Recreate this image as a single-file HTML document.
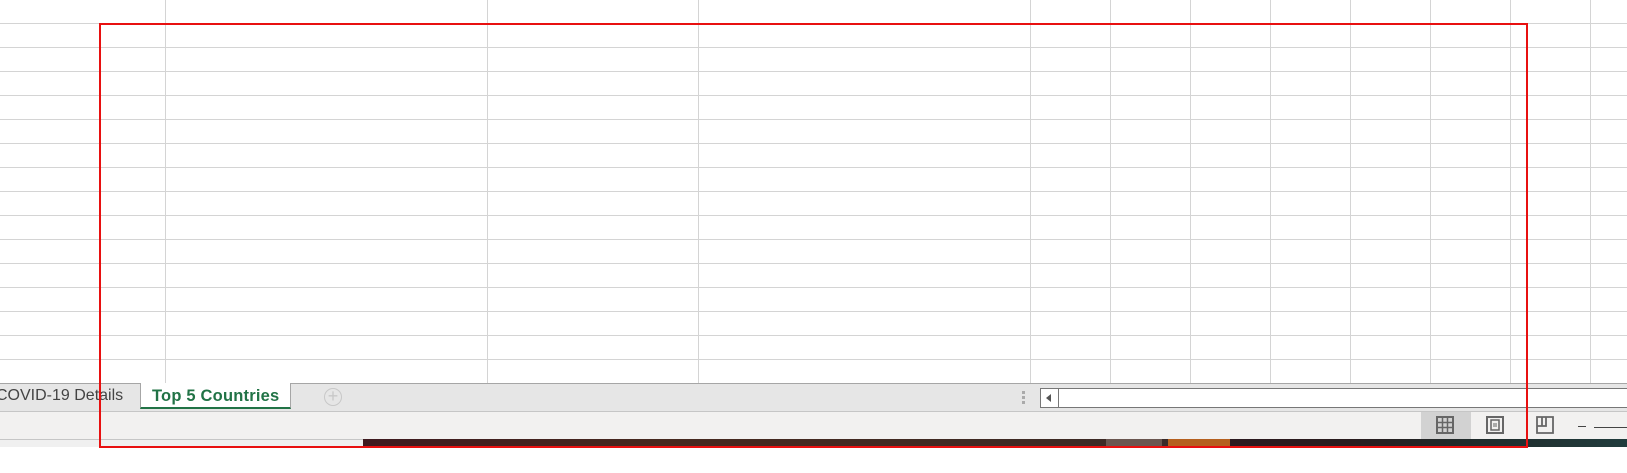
<!DOCTYPE html>
<html><head><style>
body{margin:0;width:1627px;height:473px;background:#fff;position:relative;overflow:hidden;font-family:"Liberation Sans",sans-serif}
.a{position:absolute}
</style></head><body>
<div class="a" style="left:0;top:0;width:1627px;height:383px;
background-image:
linear-gradient(to bottom,transparent 23px,#d4d4d4 23px,#d4d4d4 24px,transparent 24px);
background-size:1627px 24px;background-position:0 0"></div>
<div class="a" style="left:165px;top:0;width:1px;height:383px;background:#d4d4d4"></div>
<div class="a" style="left:487px;top:0;width:1px;height:383px;background:#d4d4d4"></div>
<div class="a" style="left:698px;top:0;width:1px;height:383px;background:#d4d4d4"></div>
<div class="a" style="left:1030px;top:0;width:1px;height:383px;background:#d4d4d4"></div>
<div class="a" style="left:1110px;top:0;width:1px;height:383px;background:#d4d4d4"></div>
<div class="a" style="left:1190px;top:0;width:1px;height:383px;background:#d4d4d4"></div>
<div class="a" style="left:1270px;top:0;width:1px;height:383px;background:#d4d4d4"></div>
<div class="a" style="left:1350px;top:0;width:1px;height:383px;background:#d4d4d4"></div>
<div class="a" style="left:1430px;top:0;width:1px;height:383px;background:#d4d4d4"></div>
<div class="a" style="left:1510px;top:0;width:1px;height:383px;background:#d4d4d4"></div>
<div class="a" style="left:1590px;top:0;width:1px;height:383px;background:#d4d4d4"></div>
<!-- tab bar -->
<div class="a" style="left:0;top:383px;width:1627px;height:29px;background:#e6e6e6;border-top:1px solid #a6a6a6;border-bottom:1px solid #c6c6c6;box-sizing:border-box"></div>
<div class="a" style="left:-4px;top:384px;font-size:16px;color:#444;line-height:24px">COVID-19 Details</div>
<div class="a" style="left:140px;top:383px;width:151px;height:26px;background:#fff;border-left:1px solid #a6a6a6;border-right:1px solid #a6a6a6;border-bottom:2px solid #217346;box-sizing:border-box"></div>
<div class="a" style="left:152px;top:384px;font-size:16.5px;font-weight:bold;color:#217346;line-height:24px;letter-spacing:0.2px">Top 5 Countries</div>
<div class="a" style="left:324px;top:388px;width:18px;height:18px;border:1px solid #c8c8c8;border-radius:50%;box-sizing:border-box;color:#c8c8c8;font-size:18px;line-height:15px;text-align:center">+</div>
<div class="a" style="left:1022px;top:391px;width:3px;height:3px;background:#aaa;box-shadow:0 5px #aaa,0 10px #aaa"></div>
<div class="a" style="left:1040px;top:388px;width:600px;height:20px;background:#fff;border:1px solid #777;box-sizing:border-box"></div>
<div class="a" style="left:1058px;top:388px;width:1px;height:20px;background:#777"></div>
<div class="a" style="left:1046px;top:394px;width:0;height:0;border-top:4px solid transparent;border-bottom:4px solid transparent;border-right:5px solid #555"></div>
<!-- status bar -->
<div class="a" style="left:0;top:412px;width:1627px;height:27px;background:#f2f1f0"></div>
<div class="a" style="left:1421px;top:412px;width:50px;height:27px;background:#d2d2d2"></div>
<svg class="a" style="left:1436px;top:416px" width="18" height="18"><rect x="1" y="1" width="16" height="16" fill="none" stroke="#666" stroke-width="2"/><path d="M6.5 1v16M11.5 1v16M1 6.5h16M1 11.5h16" stroke="#666" stroke-width="1.5"/></svg>
<svg class="a" style="left:1486px;top:416px" width="18" height="18"><rect x="1" y="1" width="16" height="16" fill="none" stroke="#666" stroke-width="2"/><rect x="5" y="4" width="8" height="10" fill="none" stroke="#666" stroke-width="1.5"/><path d="M7 8h4M7 10h4" stroke="#666"/></svg>
<svg class="a" style="left:1536px;top:416px" width="18" height="18"><path d="M1 1h16v16H1zM1 10h9V1M6 1v9" fill="none" stroke="#666" stroke-width="1.8"/></svg>
<div class="a" style="left:1578px;top:426px;width:8px;height:1px;background:#444"></div>
<div class="a" style="left:1594px;top:427px;width:40px;height:1px;background:#444"></div>
<!-- bottom strip -->
<div class="a" style="left:0;top:439px;width:363px;height:8px;background:#f0f0f0;border-top:1px solid #c6c6c6;box-sizing:border-box"></div>
<div class="a" style="left:363px;top:439px;width:743px;height:8px;background:linear-gradient(to right,#3f1a1f,#47291f 40%,#3d2a25)"></div>
<div class="a" style="left:1106px;top:439px;width:56px;height:8px;background:#6a5650"></div>
<div class="a" style="left:1162px;top:439px;width:6px;height:8px;background:#3a2a28"></div>
<div class="a" style="left:1168px;top:439px;width:62px;height:8px;background:#b5601f"></div>
<div class="a" style="left:1230px;top:439px;width:397px;height:8px;background:linear-gradient(to right,#2d1a1f,#2a1c1e 30%,#1f2a2a 60%,#203c3d)"></div>
<!-- red rect -->
<div class="a" style="left:99px;top:23px;width:1429px;height:425px;border:2px solid #e81010;box-sizing:border-box"></div>
</body></html>
